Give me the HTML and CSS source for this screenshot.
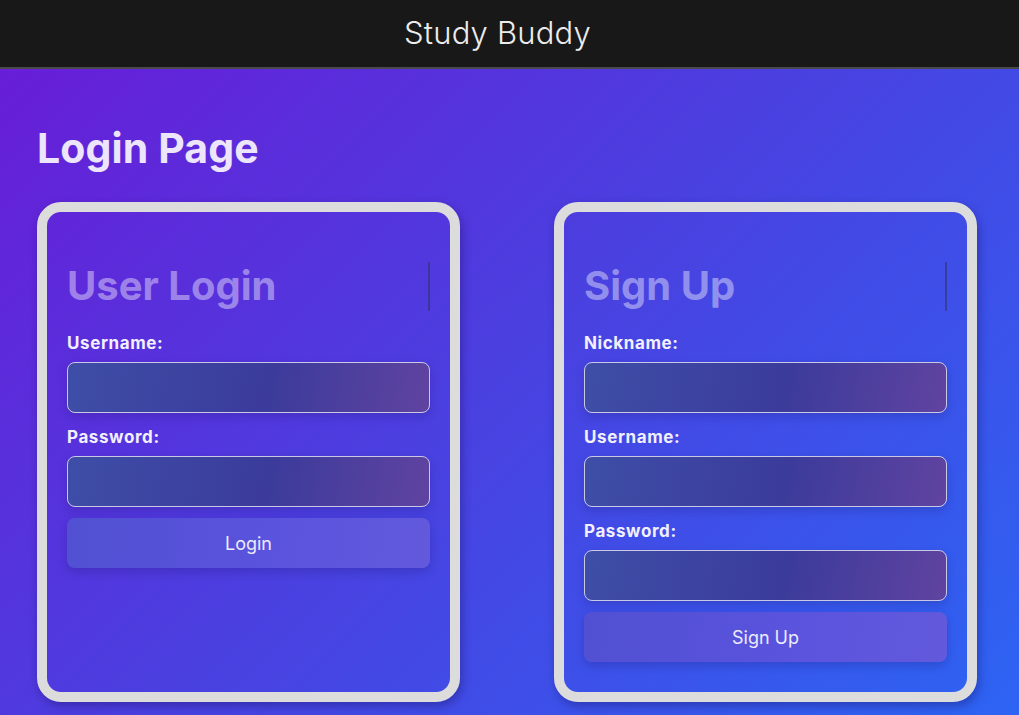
FILE: index.html
```html
<!DOCTYPE html>
<html lang="en">
<head>
<meta charset="utf-8">
<title>Study Buddy</title>
<link rel="stylesheet" href="styles.css">
</head>
<body>
<header class="topbar">
  <div class="brand">Study Buddy</div>
</header>
<main class="page">
  <h1 class="page-title">Login Page</h1>
  <div class="cards">
    <section class="card">
      <h2 class="card-title">User Login</h2>
      <form class="form">
        <label class="label">Username:</label>
        <input class="field" type="text">
        <label class="label">Password:</label>
        <input class="field" type="password">
        <button class="btn" type="button">Login</button>
      </form>
    </section>
    <section class="card">
      <h2 class="card-title">Sign Up</h2>
      <form class="form">
        <label class="label">Nickname:</label>
        <input class="field" type="text">
        <label class="label">Username:</label>
        <input class="field" type="text">
        <label class="label">Password:</label>
        <input class="field" type="password">
        <button class="btn" type="button">Sign Up</button>
      </form>
    </section>
  </div>
</main>
</body>
</html>
```
FILE: styles.css
```css
* { box-sizing: border-box; }
html, body { margin: 0; padding: 0; }
body {
  font-family: "Inter", "Open Sans", sans-serif;
  min-height: 715px;
  background: linear-gradient(135deg, #6a1bd6 0%, #4a40e0 50%, #2d64f3 100%);
  overflow: hidden;
}
.topbar {
  height: 69px;
  background: #181818;
  border-bottom: 2px solid #4a4a4a;
  display: flex;
  justify-content: center;
  align-items: center;
  padding-right: 24px;
}
.brand {
  color: #ececec;
  font-size: 31px;
  font-weight: 300;
  letter-spacing: 0.2px;
  padding-bottom: 3px;
}
.page {
  padding: 0 42px 0 37px;
}
.page-title {
  margin: 55px 0 30px 0;
  color: #ede5fb;
  font-size: 41px;
  line-height: 48px;
  font-weight: 700;
  letter-spacing: 0.1px;
}
.cards {
  display: grid;
  grid-template-columns: 423px 423px;
  column-gap: 94px;
}
.card {
  height: 500px;
  border: 10px solid #dcdcdc;
  border-radius: 24px;
  padding: 50px 20px 30px 20px;
  box-shadow: 2px 4px 10px rgba(20, 10, 80, 0.35);
}
.card-title {
  margin: 0 0 20px 0;
  height: 49px;
  line-height: 47px;
  font-size: 40px;
  font-weight: 700;
  letter-spacing: 0;
  color: rgba(255, 255, 255, 0.42);
  border-right: 2px solid rgba(50, 50, 110, 0.6);
}
.form {
  display: flex;
  flex-direction: column;
}
.label {
  height: 24px;
  line-height: 24px;
  font-size: 17px;
  font-weight: 700;
  color: #f2f0ff;
  margin-bottom: 7px;
  letter-spacing: 0.6px;
}
.field {
  flex: 0 0 51px;
  height: 51px;
  width: 100%;
  border: 1px solid #c9c9e6;
  border-radius: 8px;
  background: linear-gradient(100deg, #3e4ea7 0%, #3b3b9b 55%, #6043a0 100%);
  box-shadow: 0 4px 10px rgba(20, 10, 80, 0.18);
  margin: 0 0 11px 0;
}
.field + .label { margin-top: 1px; }
.btn {
  flex: 0 0 50px;
  height: 50px;
  width: 100%;
  border: none;
  border-radius: 8px;
  background: linear-gradient(100deg, #5150d2 0%, #5a53dd 55%, #6259dc 100%);
  color: #ecebff;
  font-family: "Inter", "Open Sans", sans-serif;
  font-size: 18px;
  font-weight: 400;
  box-shadow: 0 4px 10px rgba(20, 10, 80, 0.2);
}
```
